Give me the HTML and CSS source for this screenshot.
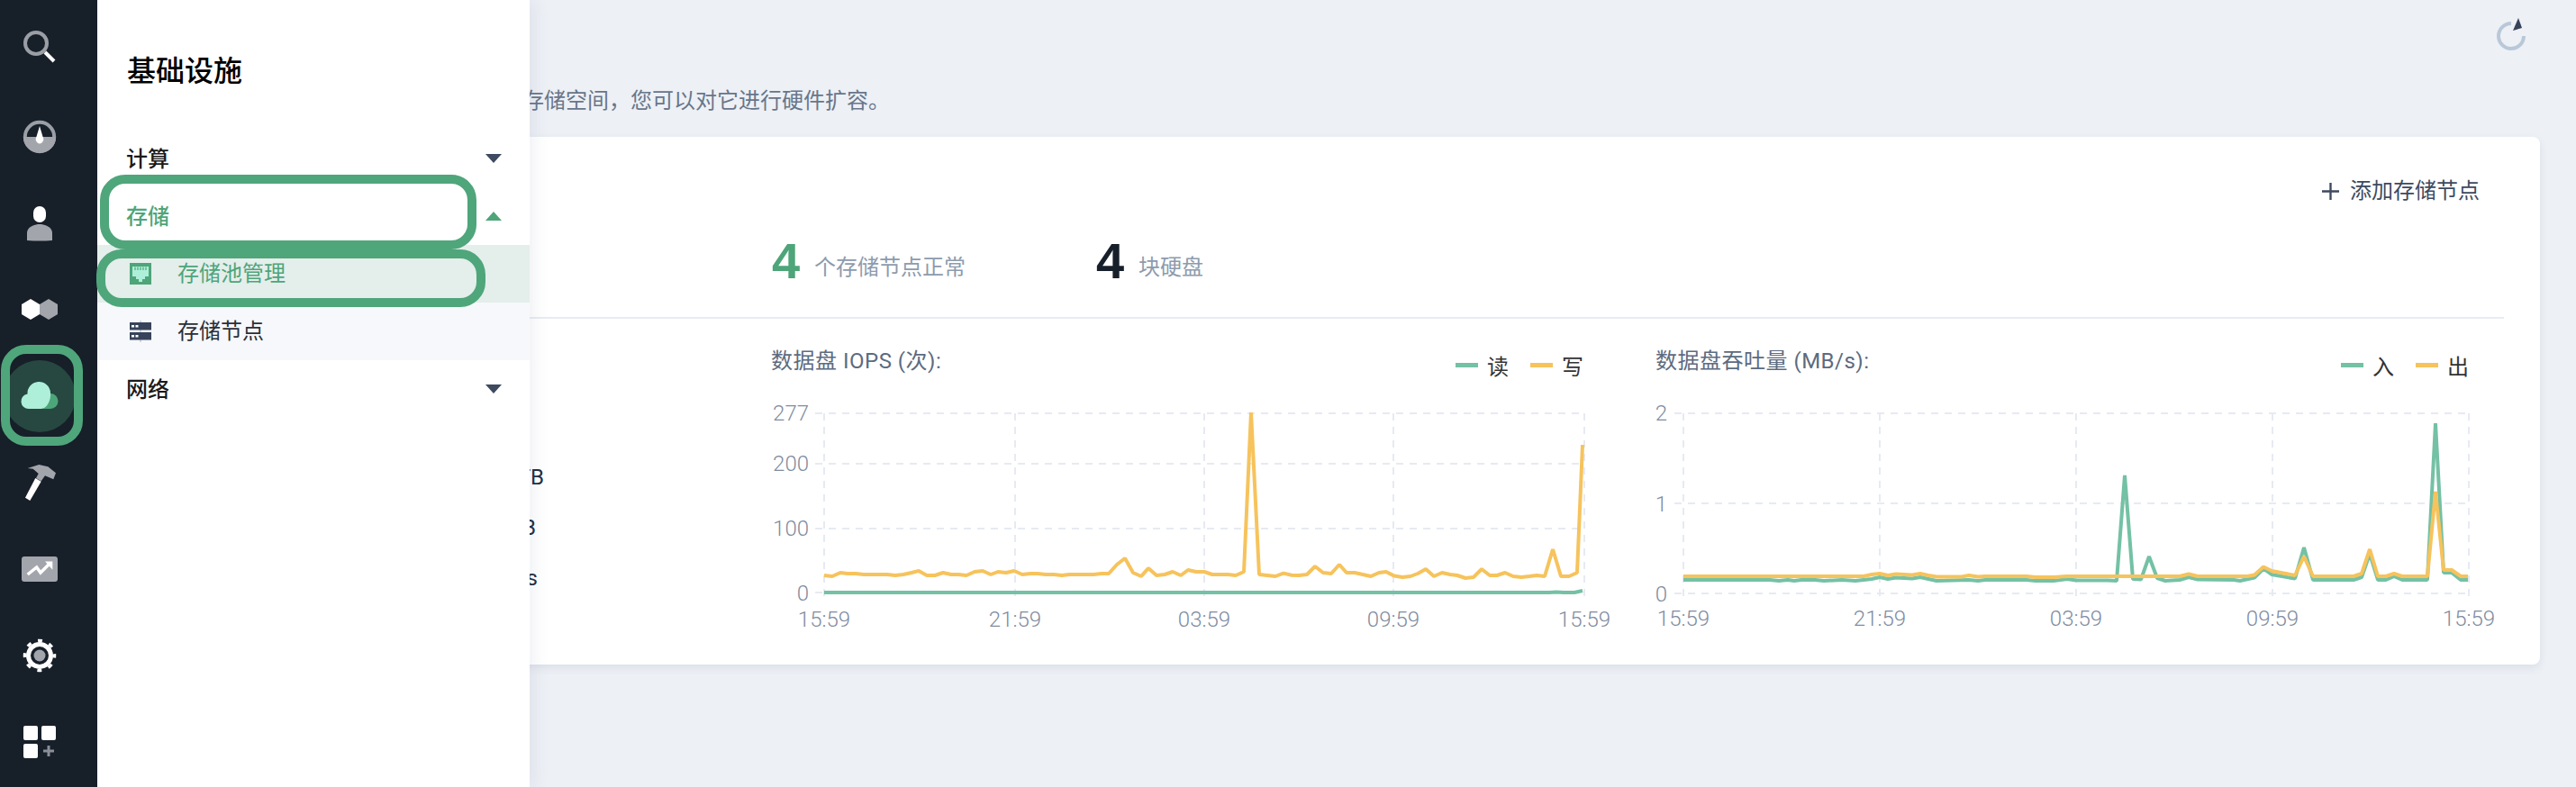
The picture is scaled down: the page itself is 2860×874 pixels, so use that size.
FILE: index.html
```html
<!DOCTYPE html>
<html lang="zh-CN">
<head>
    <meta charset="UTF-8">
    <title>存储节点</title>
    <link rel="stylesheet" href="styles.css">
</head>
<body>
<div class="page">
    <nav class="rail">
        <a class="rail-item">
            <svg class="rail-icon" viewBox="0 0 48 48"><circle class="gray-line" cx="20" cy="16" r="12"/><path class="white-line" d="M30 26L40 36"/></svg>
        </a>
        <a class="rail-item">
            <svg class="rail-icon" viewBox="0 0 48 48"><circle class="gray-line" cx="24" cy="24" r="16.2"/><path class="gray-fill" d="M6 24H42A18 18 0 0 1 6 24Z"/><path class="white-fill" d="M24 12L27.6 24A4.2 4.8 0 1 1 20.4 24Z"/></svg>
        </a>
        <a class="rail-item">
            <svg class="rail-icon" viewBox="0 0 48 48"><rect class="white-fill" x="17" y="5" width="14" height="18" rx="7"/><path class="gray-fill" d="M10 43V35C10 28 18 25 24 25C30 25 38 28 38 35V43Q24 44 10 43Z"/></svg>
        </a>
        <a class="rail-item">
            <svg class="rail-icon" viewBox="0 0 48 48"><path class="gray-fill" d="M34 12L44 18V29L34 35L24 29V18Z"/><path class="white-fill" d="M14 12L24 18V29L14 35L4 29V18Z"/></svg>
        </a>
        <a class="rail-item rail-item-on">
            <svg class="rail-icon" viewBox="0 0 48 48"><path class="cloud-back" d="M28 38H36A8.5 8.5 0 0 0 36 21H28Z"/><path class="cloud-front" d="M12 38A8.3 8.3 0 0 1 10.5 21.5A12.5 12.5 0 0 1 36 20C37 28 32 38 26 38Z"/></svg>
        </a>
        <a class="rail-item">
            <svg class="rail-icon" viewBox="0 0 48 48"><path class="gray-fill" d="M10.7 8L23.3 4L33.3 6.3L42 13.3L39.3 20.3L30 16.3L25.7 22.3L20 19L22.7 14L16.7 8.7Z"/><path class="white-fill" d="M19.3 19L25.7 22.7L13.3 44L8 40.7Z"/></svg>
        </a>
        <a class="rail-item">
            <svg class="rail-icon" viewBox="0 0 48 48"><rect class="gray-fill" x="4" y="10" width="40" height="28" rx="3"/><path class="white-line thin" d="M10.7 30L20.7 22L25 28L35 18"/><path class="white-fill" d="M30 15.5H38.3V24.7Z"/></svg>
        </a>
        <a class="rail-item">
            <svg class="rail-icon" viewBox="0 0 48 48"><circle class="gear-teeth" cx="24" cy="24" r="16.5"/><circle class="gear-ring" cx="24" cy="24" r="12.5"/><circle class="gray-fill" cx="24" cy="24" r="6.5"/></svg>
        </a>
        <a class="rail-item">
            <svg class="rail-icon" viewBox="0 0 48 48"><rect class="white-fill" x="6" y="6" width="16" height="16" rx="2"/><rect class="white-fill" x="26" y="6" width="16" height="16" rx="2"/><rect class="white-fill" x="6" y="26" width="16" height="16" rx="2"/><path class="plus-line" d="M28 34H40M34 28V40"/></svg>
        </a>
    </nav>

    <main class="main">
        <div class="page-head">
            <p class="desc">存储节点为集群提供存储空间，您可以对它进行硬件扩容。</p>
            <svg class="refresh" viewBox="0 0 40 40"><path class="refresh-arc" d="M34 20A14 14 0 1 1 20 6"/><path class="refresh-tip" d="M28 0L32 11L22 14Z"/></svg>
        </div>

        <section class="card">
            <div class="card-tools">
                <a class="add-btn"><svg class="add-icon" viewBox="0 0 20 20"><path d="M0 10H20M10 0V20"/></svg>添加存储节点</a>
            </div>
            <div class="stats">
                <div class="stat stat-first"><b class="stat-num stat-ok">4</b><span class="stat-label">个存储节点正常</span></div>
                <div class="stat"><b class="stat-num">4</b><span class="stat-label">块硬盘</span></div>
            </div>
            <div class="card-body">
                <ul class="usage">
                    <li>3.65 TB</li>
                    <li class="usage-b">128 GB</li>
                    <li class="usage-c">12 MB/s</li>
                </ul>
                <div class="chart">
                    <div class="chart-head">
                        <h3 class="chart-title">数据盘 IOPS (次):</h3>
                        <div class="legend"><i class="dash dash-green"></i><span>读</span><i class="dash dash-yellow"></i><span>写</span></div>
                    </div>
                    <svg class="plot" width="902" height="260" viewBox="856 440 902 260">
                        <path class="grid" d="M905 459H1759M905 515H1759M905 587H1759M905 658H1759"/>
                        <path class="grid" d="M915 459V668M1127 459V668M1337 459V668M1547 459V668M1759 459V668"/>
                        <text class="tick" x="898" y="467" text-anchor="end">277</text>
                        <text class="tick" x="898" y="523" text-anchor="end">200</text>
                        <text class="tick" x="898" y="595" text-anchor="end">100</text>
                        <text class="tick" x="898" y="667" text-anchor="end">0</text>
                        <text class="tick" x="915" y="696" text-anchor="middle">15:59</text>
                        <text class="tick" x="1127" y="696" text-anchor="middle">21:59</text>
                        <text class="tick" x="1337" y="696" text-anchor="middle">03:59</text>
                        <text class="tick" x="1547" y="696" text-anchor="middle">09:59</text>
                        <text class="tick" x="1759" y="696" text-anchor="middle">15:59</text>
                        <polyline class="line-green" points="915,658 1720,658 1728,657.5 1736,658 1748,658 1757,656"/>
                        <polyline class="line-yellow" points="915,639 924,640 933,636 941,637 950,637 959,638 968,638 977,638 985,638 994,639 1003,638 1012,636 1020,634 1029,639 1038,639 1047,636 1056,638 1064,638 1073,639 1082,635 1091,634 1100,638 1108,635 1117,636 1126,634 1135,638 1144,637 1152,637 1161,638 1170,638 1179,639 1187,638 1196,638 1205,638 1214,638 1223,637 1231,637 1240,627 1249,620 1258,636 1267,640 1275,631 1284,639 1293,638 1302,635 1311,639 1319,633 1328,635 1337,635 1346,638 1355,638 1363,638 1372,639 1381,635 1389,458 1398,638 1407,639 1416,640 1425,636.6 1434,638.7 1442,639 1451,638 1460,629 1469,636 1478,637 1487,627 1495,636 1504,636 1513,638 1522,640 1531,636 1539,635 1548,639.6 1557,641 1566,640 1574,637 1583,632 1592,640 1601,636 1610,638 1618,639 1627,642 1636,641 1645,632 1654,639 1662,639 1671,636 1680,640 1689,641 1698,640 1706,639 1715,640 1724,610 1733,640 1742,640 1751,636 1757,494"/>
                    </svg>
                </div>
                <div class="chart">
                    <div class="chart-head">
                        <h3 class="chart-title">数据盘吞吐量 (MB/s):</h3>
                        <div class="legend"><i class="dash dash-green"></i><span>入</span><i class="dash dash-yellow"></i><span>出</span></div>
                    </div>
                    <svg class="plot" width="903" height="260" viewBox="1838 440 903 260">
                        <path class="grid" d="M1859 459H2741M1859 559H2741M1859 659H2741"/>
                        <path class="grid" d="M1869 459V668M2087 459V668M2305 459V668M2523 459V668M2741 459V668"/>
                        <text class="tick" x="1851" y="467" text-anchor="end">2</text>
                        <text class="tick" x="1851" y="568" text-anchor="end">1</text>
                        <text class="tick" x="1851" y="668" text-anchor="end">0</text>
                        <text class="tick" x="1869" y="695" text-anchor="middle">15:59</text>
                        <text class="tick" x="2087" y="695" text-anchor="middle">21:59</text>
                        <text class="tick" x="2305" y="695" text-anchor="middle">03:59</text>
                        <text class="tick" x="2523" y="695" text-anchor="middle">09:59</text>
                        <text class="tick" x="2741" y="695" text-anchor="middle">15:59</text>
                        <polyline class="line-green" points="1869,644 1965,644 1975,645 1985,644 1992,645 2000,644 2015,644 2025,645 2045,644 2060,645 2078,643 2087,641 2096,643 2105,641.5 2123,642.5 2132,641 2141,643 2150,645 2186,644 2196,645 2204,644 2250,644 2260,645 2280,645 2295,643 2305,644.5 2340,644.5 2350,645 2359,528 2368,643 2377,643.5 2386,618 2395,642 2404,645 2420,644 2430,641 2440,643.5 2480,644 2487,645 2503,641.5 2513,631.5 2522,638 2548,642.5 2558,608 2568,644 2613,644 2622,641 2631,615 2640,644 2649,644 2658,640 2667,644 2695,644 2704,470 2713,636 2722,636 2732,644 2740,644"/>
                        <polyline class="line-yellow" points="1869,640 2069,640 2078,638 2087,637 2096,639 2105,637.5 2123,638.5 2132,637 2141,639 2150,640.5 2178,640.5 2186,639 2196,640.5 2204,640 2250,640 2260,641 2280,641 2295,640 2420,640 2430,637.5 2440,640 2495,640 2503,638.5 2513,629.5 2522,634 2548,639 2558,618 2568,640 2613,640 2622,637 2631,610 2640,640 2649,640 2658,637 2667,640 2695,640 2704,546 2713,633 2722,633 2732,640 2740,640"/>
                    </svg>
                </div>
            </div>
        </section>
    </main>

    <aside class="drawer">
        <h2 class="drawer-title">基础设施</h2>
        <div class="menu-row"><span>计算</span><i class="caret"></i></div>
        <div class="menu-row menu-row-open"><span>存储</span><i class="caret caret-up"></i></div>
        <div class="sub-row sub-row-on">
            <svg class="sub-icon" viewBox="0 0 24 24"><rect class="pool-bg" width="24" height="24"/><path class="pool-port" d="M3 4H21V15H17V18H14V21H10V18H7V15H3Z"/><path class="pool-pins" d="M6 4.5V8M9 4.5V8M12 4.5V8M15 4.5V8M18 4.5V8"/></svg>
            <span>存储池管理</span>
        </div>
        <div class="sub-row">
            <svg class="sub-icon" viewBox="0 0 24 24"><path class="node-axis" d="M12 0V24"/><rect class="node-bar" y="2" width="24" height="8.5"/><rect class="node-bar" y="13" width="24" height="8.5"/><path class="node-dots" d="M2 6.2H5M6.5 6.2H9.5M2 17.2H5M6.5 17.2H9.5"/></svg>
            <span>存储节点</span>
        </div>
        <div class="menu-row"><span>网络</span><i class="caret"></i></div>
    </aside>

    <div class="mark mark-cloud"></div>
    <div class="mark mark-storage"></div>
    <div class="mark mark-pool"></div>
</div>
</body>
</html>
```

FILE: styles.css
```css
*{
    padding: 0;
    margin: 0;
    box-sizing: border-box;
}
body{
    width: 2860px;
    height: 874px;
    overflow: hidden;
    background: #edf0f5;
    font-family: Roboto, "Noto Sans CJK SC", sans-serif;
    font-size: 24px;
}
.page{
    position: relative;
    display: flex;
    height: 874px;
}

/* left icon rail */
.rail{
    flex: 0 0 108px;
    padding: 8px 20px 0 0;
    background: #171f29;
}
.rail-item{
    display: flex;
    align-items: center;
    justify-content: center;
    height: 96px;
}
.rail-item-on{
    position: relative;
}
.rail-item-on::before{
    content: "";
    position: absolute;
    left: 4px;
    top: 8px;
    width: 80px;
    height: 80px;
    border-radius: 50%;
    background: #264840;
}
.rail-icon{
    position: relative;
    width: 48px;
    height: 48px;
}
.gray-line{
    fill: none;
    stroke: #9a9ea5;
    stroke-width: 4;
}
.gray-fill{
    fill: #a2a5ab;
}
.white-line{
    fill: none;
    stroke: #fff;
    stroke-width: 4;
}
.white-fill{
    fill: #fff;
}
.thin{
    stroke-width: 3.5;
}
.cloud-back{
    fill: #4da67a;
}
.cloud-front{
    fill: #aeefd9;
}
.gear-teeth{
    fill: none;
    stroke: #fff;
    stroke-width: 3.5;
    stroke-dasharray: 5 7.96;
    stroke-dashoffset: 2.5;
}
.gear-ring{
    fill: none;
    stroke: #fff;
    stroke-width: 5;
}
.plus-line{
    fill: none;
    stroke: #8a8e96;
    stroke-width: 3;
}

/* main content */
.main{
    flex: 1;
    padding: 0 40px;
}
.page-head{
    display: flex;
    justify-content: space-between;
    height: 152px;
    padding: 20px 12px 0 0;
}
.desc{
    margin: 76px 0 0 216px;
    line-height: 32px;
    color: #67768a;
}
.refresh{
    width: 40px;
    height: 40px;
}
.refresh-arc{
    fill: none;
    stroke: #b9c8d8;
    stroke-width: 4;
}
.refresh-tip{
    fill: #36425a;
}
.card{
    height: 586px;
    padding: 40px 40px 0;
    background: #fff;
    border-radius: 8px;
    box-shadow: 0 4px 10px rgba(72, 91, 127, 0.1);
}
.card-tools{
    display: flex;
    justify-content: flex-end;
    padding-right: 27px;
}
.add-btn{
    display: flex;
    align-items: center;
    line-height: 40px;
    color: #3d4a5f;
}
.add-icon{
    width: 19px;
    height: 19px;
    margin-right: 12px;
}
.add-icon path{
    stroke: #3d4a5f;
    stroke-width: 2.5;
    fill: none;
}
.stats{
    display: flex;
    height: 94px;
    padding: 26px 0 0 669px;
}
.stat{
    display: flex;
    align-items: flex-start;
}
.stat-first{
    width: 360px;
}
.stat-num{
    width: 47px;
    font: 700 56px/64px "Liberation Sans", sans-serif;
    color: #17202a;
}
.stat-ok{
    color: #4ea57a;
}
.stat-label{
    margin-top: 21px;
    line-height: 36px;
    color: #8d9bad;
}
.card-body{
    display: grid;
    grid-template-columns: 668px 902px 903px;
    margin-top: 26px;
    padding-top: 26px;
    border-top: 2px solid #e8ecf1;
}
.chart + .chart{
    margin-left: 80px;
    margin-right: -80px;
}
.usage{
    padding: 122px 252px 0 0;
    list-style: none;
    text-align: right;
    line-height: 56px;
    color: #242e42;
}
.usage-b{
    padding-right: 9px;
}
.usage-c{
    padding-right: 7px;
}
.chart-head{
    display: flex;
    justify-content: space-between;
    height: 60px;
}
.chart-title{
    font-size: 24px;
    font-weight: 400;
    line-height: 42px;
    letter-spacing: 0.5px;
    color: #5c6b80;
}
.legend{
    display: flex;
    align-items: center;
    height: 50px;
    color: #333;
}
.dash{
    width: 25px;
    height: 5px;
    margin-right: 10px;
}
.dash-green{
    background: #74c1a5;
}
.dash-yellow{
    margin-left: 24px;
    background: #f6c35c;
}
.plot{
    display: block;
    overflow: visible;
}
.grid{
    fill: none;
    stroke: #e6eaf2;
    stroke-width: 2;
    stroke-dasharray: 8 7;
}
.tick{
    font-size: 24px;
    font-weight: 300;
    fill: #7f8c9f;
}
.line-green,
.line-yellow{
    fill: none;
    stroke-width: 4;
    stroke-linejoin: bevel;
}
.line-green{
    stroke: #74c1a5;
}
.line-yellow{
    stroke: #f6c35c;
}

/* slide-out panel over the page */
.drawer{
    position: absolute;
    left: 108px;
    top: 0;
    bottom: 0;
    width: 480px;
    background: #fff;
    box-shadow: 6px 0 16px rgba(72, 91, 127, 0.08);
}
.drawer-title{
    height: 144px;
    padding: 56px 0 0 33px;
    font-size: 32px;
    font-weight: 500;
    line-height: 46px;
    color: #000;
}
.menu-row{
    display: flex;
    align-items: center;
    justify-content: space-between;
    height: 64px;
    padding: 0 31px 0 32px;
    font-weight: 500;
    color: #1a1a1a;
}
.menu-row span{
    padding-bottom: 4px;
}
.menu-row-open{
    color: #4ea57a;
}
.caret{
    width: 0;
    height: 0;
    border-left: 9px solid transparent;
    border-right: 9px solid transparent;
    border-top: 10px solid #3d4a5f;
}
.caret-up{
    border-top: 0;
    border-bottom: 10px solid #4ea57a;
}
.sub-row{
    display: flex;
    align-items: center;
    height: 64px;
    padding-left: 36px;
    background: #f6f8fb;
    color: #2b2f36;
}
.sub-row span{
    padding-bottom: 5px;
}
.sub-row-on{
    background: #e4eeeb;
    color: #4ea57a;
}
.sub-icon{
    width: 24px;
    height: 24px;
    margin-right: 29px;
}
.pool-bg{
    fill: #4ea57a;
}
.pool-port{
    fill: #aeefd9;
}
.pool-pins{
    stroke: #4ea57a;
    stroke-width: 1.2;
}
.node-axis{
    stroke: #c5ccd8;
    stroke-width: 1.5;
}
.node-bar{
    fill: #36435a;
}
.node-dots{
    stroke: #fff;
    stroke-width: 2.5;
}

/* green annotation frames */
.mark{
    position: absolute;
    border: 10.5px solid #4fa67b;
    border-radius: 28px;
}
.mark-cloud{
    left: 1px;
    top: 383px;
    width: 91px;
    height: 112px;
}
.mark-storage{
    left: 111px;
    top: 194px;
    width: 418px;
    height: 83px;
}
.mark-pool{
    left: 107px;
    top: 277px;
    width: 432px;
    height: 64px;
}
```
